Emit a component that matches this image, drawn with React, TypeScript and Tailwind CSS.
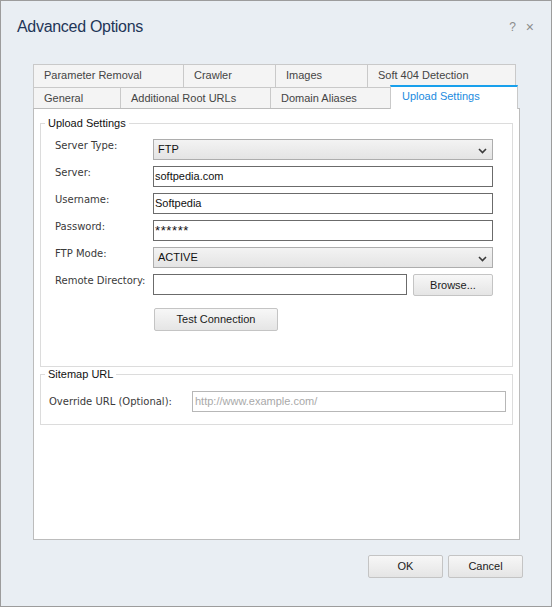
import React from 'react';

const SANS = "font-['Liberation_Sans',Arial,sans-serif]";
const TAHOMA = "font-['DejaVu_Sans',Verdana,sans-serif]";

const TOP_TABS = [
  { label: 'Parameter Removal', w: 'w-[150px]' },
  { label: 'Crawler', w: 'w-[92px]' },
  { label: 'Images', w: 'w-[92px]' },
  { label: 'Soft 404 Detection', w: 'w-[149px] border-r' },
];

const BOTTOM_TABS = [
  { label: 'General', w: 'w-[87px]' },
  { label: 'Additional Root URLs', w: 'w-[150px]' },
  { label: 'Domain Aliases', w: 'w-[120px]' },
];

const Chevron = () => (
  <svg width="9" height="6" viewBox="0 0 9 6" className="absolute right-[5px] top-[8px]">
    <path d="M1 1 L4.5 4.5 L8 1" fill="none" stroke="#3a3a3a" strokeWidth="1.6" />
  </svg>
);

const Dropdown = ({ value }: { value: string }) => (
  <div className="relative h-[21px] w-[340px] border border-[#adadad] bg-gradient-to-b from-[#f3f3f3] to-[#e4e4e4] pl-[4px] text-[11px] leading-[19px] text-[#111]">
    {value}
    <Chevron />
  </div>
);

const TextBox = ({ value, w = 'w-[340px]', extra = '' }: { value: string; w?: string; extra?: string }) => (
  <div className={`h-[21px] ${w} border border-[#6b6b6b] bg-white pl-[1px] text-[11px] leading-[19px] text-[#111] ${extra}`}>
    {value}
  </div>
);

const Row = ({ label, children }: { label: string; children: React.ReactNode }) => (
  <div className="flex items-start">
    <div className={`${TAHOMA} w-[98px] text-[10px] leading-[13px] text-[#3a3a3a]`}>{label}</div>
    {children}
  </div>
);

const Button = ({ label, w }: { label: string; w: string }) => (
  <div
    className={`${w} flex items-center justify-center rounded-[2px] border border-[#c4c4c4] bg-gradient-to-b from-[#f7f7f7] to-[#e5e5e5] text-[11px] text-[#1a1a1a]`}
  >
    {label}
  </div>
);

export default function App() {
  return (
    <div className={`${SANS} flex h-[607px] w-[552px] flex-col border border-[#9c9c9c] bg-[#e9eef3]`}>
      {/* title */}
      <div className="flex h-[63px] items-start justify-between pl-[16px] pr-[17px] pt-[16px]">
        <div className="text-[16px] leading-[20px] tracking-[-0.3px] text-[#1f3658]">Advanced Options</div>
        <div className="flex gap-[10px] pt-[2px] text-[12px] leading-[16px] text-[#8c8c8c]">
          <span>?</span>
          <span className="text-[14px]">×</span>
        </div>
      </div>

      {/* tabs */}
      <div className="ml-[32px] flex h-[23px] text-[11px] text-[#444]">
        {TOP_TABS.map((t) => (
          <div key={t.label} className={`${t.w} border-l border-t border-[#c9c9c9] bg-[#f4f4f4] pl-[10px] leading-[21px]`}>
            {t.label}
          </div>
        ))}
      </div>
      <div className="ml-[32px] flex h-[21px] text-[11px] text-[#444]">
        {BOTTOM_TABS.map((t) => (
          <div key={t.label} className={`${t.w} border-l border-t border-[#c9c9c9] bg-[#f4f4f4] pl-[10px] leading-[20px]`}>
            {t.label}
          </div>
        ))}
        <div className="relative z-10 -mt-[2px] h-[24px] w-[128px] border-x border-t-2 border-x-[#c9c9c9] border-t-[#18a0ec] bg-white pl-[11px] leading-[19px] text-[#1b8be0]">
          Upload Settings
        </div>
      </div>

      {/* panel */}
      <div className="ml-[32px] h-[432px] w-[487px] border border-[#bcbcbc] bg-white px-[6px] pt-[6px]">
        <fieldset className="h-[252px] border border-[#dcdcdc]">
          <legend className="ml-[4px] px-[3px] text-[11px] leading-[16px] text-[#111]">Upload Settings</legend>
          <div className="flex flex-col gap-[6px] pl-[14px] pt-[8px]">
            <Row label="Server Type:">
              <Dropdown value="FTP" />
            </Row>
            <Row label="Server:">
              <TextBox value="softpedia.com" />
            </Row>
            <Row label="Username:">
              <TextBox value="Softpedia" />
            </Row>
            <Row label="Password:">
              <TextBox value="******" extra="text-[13px] tracking-[0.6px]" />
            </Row>
            <Row label="FTP Mode:">
              <Dropdown value="ACTIVE" />
            </Row>
            <Row label="Remote Directory:">
              <div className="flex gap-[6px]">
                <TextBox value="" w="w-[254px]" />
                <Button label="Browse..." w="w-[80px] h-[22px]" />
              </div>
            </Row>
            <div className="ml-[99px] mt-[6px] flex">
              <Button label="Test Connection" w="w-[124px] h-[23px]" />
            </div>
          </div>
        </fieldset>

        <fieldset className="border border-[#dcdcdc]">
          <legend className="ml-[4px] px-[3px] text-[11px] leading-[14px] text-[#111]">Sitemap URL</legend>
          <div className="flex items-center pb-[12px] pl-[8px] pt-[10px]">
            <div className={`${TAHOMA} w-[143px] text-[10px] text-[#3a3a3a]`}>Override URL (Optional):</div>
            <div className="h-[21px] w-[314px] border border-[#b7b7b7] bg-white pl-[2px] text-[11px] leading-[19px] text-[#a9a9a9]">
              http://www.example.com/
            </div>
          </div>
        </fieldset>
      </div>

      {/* footer */}
      <div className="mr-[28px] mt-[15px] flex justify-end gap-[5px]">
        <Button label="OK" w="w-[75px] h-[23px]" />
        <Button label="Cancel" w="w-[75px] h-[23px]" />
      </div>
    </div>
  );
}
